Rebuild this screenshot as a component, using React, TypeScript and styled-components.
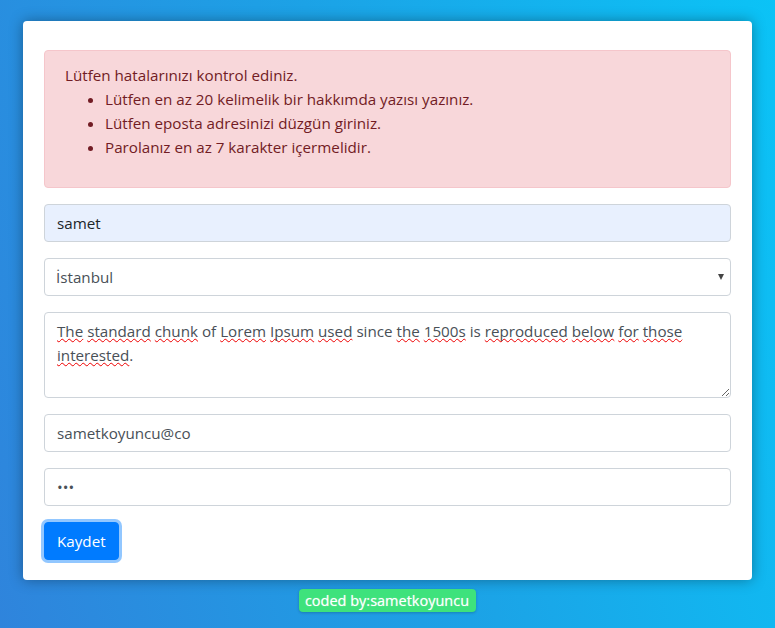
import React from "react";
import styled, { createGlobalStyle } from "styled-components";

const Global = createGlobalStyle`
  html, body {
    margin: 0;
    min-height: 100%;
  }
  body {
    font-family: "Open Sans", "Noto Sans", sans-serif;
    font-size: 15.2px;
    line-height: 24px;
    color: #212529;
    background: linear-gradient(75deg, #2f84dc 0%, #1ca2e6 50%, #0bc3f6 100%);
    min-height: 628px;
  }
  * { box-sizing: border-box; }
`;

const Page = styled.div`
  padding-top: 21px;
  display: flex;
  flex-direction: column;
  align-items: center;
`;

const Card = styled.div`
  width: 729px;
  background: #fff;
  border-radius: 4px;
  padding: 29px 21px 20px;
  box-shadow: 0 0 14px rgba(0, 0, 0, 0.35);
`;

const Alert = styled.div`
  background: #f8d7da;
  border: 1px solid #f5c6cb;
  color: #721c24;
  border-radius: 4px;
  padding: 12px 20px;
  margin-bottom: 16px;
`;

const ErrorList = styled.ul`
  margin: 0 0 16px;
  padding-left: 40px;
`;

const Field = styled.input<{ $autofill?: boolean }>`
  display: block;
  width: 100%;
  height: 38px;
  padding: 6px 12px;
  font: inherit;
  color: ${(p) => (p.$autofill ? "#212529" : "#495057")};
  background: ${(p) => (p.$autofill ? "#e8f0fe" : "#fff")};
  border: 1px solid #ced4da;
  border-radius: 4px;
  margin-bottom: 16px;
  outline: none;
`;

const SelectWrap = styled.div`
  position: relative;
  margin-bottom: 16px;

  &::after {
    content: "";
    position: absolute;
    right: 7px;
    top: 16px;
    border-left: 3.5px solid transparent;
    border-right: 3.5px solid transparent;
    border-top: 6px solid #444;
    pointer-events: none;
  }
`;

const Select = styled.select`
  display: block;
  width: 100%;
  height: 38px;
  padding: 6px 11px;
  font: inherit;
  color: #495057;
  background: #fff;
  border: 1px solid #ced4da;
  border-radius: 4px;
  appearance: none;
  outline: none;
`;

const TextBox = styled.div`
  height: 86px;
  padding: 6px 12px;
  color: #495057;
  border: 1px solid #ced4da;
  border-radius: 4px;
  margin-bottom: 16px;
  overflow: auto;
  resize: vertical;
`;

const Typo = styled.span`
  text-decoration: underline wavy #e00;
  text-decoration-thickness: 1px;
  text-underline-offset: 1px;
  text-decoration-skip-ink: none;
`;

const Button = styled.button`
  font: inherit;
  color: #fff;
  background: #007bff;
  border: 1px solid #007bff;
  border-radius: 4px;
  padding: 6px 12px;
  height: 38px;
  box-shadow: 0 0 0 3px rgba(38, 143, 255, 0.5);
  cursor: pointer;
`;

const Badge = styled.div`
  margin-top: 9px;
  background: #3ee27c;
  color: #fff;
  font-size: 14.5px;
  font-weight: 500;
  line-height: 23px;
  padding: 0 7px 0 6px;
  border-radius: 4px;
  box-shadow: 0 1px 3px rgba(0, 0, 0, 0.2);
  text-shadow: 0 0 1px rgba(255, 255, 255, 0.6);
`;

const words: [string, boolean][] = [
  ["The", true], ["standard", true], ["chunk", true], ["of", false], ["Lorem", true],
  ["Ipsum", true], ["used", true], ["since", false], ["the", true], ["1500s", true],
  ["is", false], ["reproduced", true], ["below", true], ["for", true], ["those", true],
];

export default function App() {
  return (
    <Page>
      <Global />
      <Card>
        <Alert>
          Lütfen hatalarınızı kontrol ediniz.
          <ErrorList>
            <li>Lütfen en az 20 kelimelik bir hakkımda yazısı yazınız.</li>
            <li>Lütfen eposta adresinizi düzgün giriniz.</li>
            <li>Parolanız en az 7 karakter içermelidir.</li>
          </ErrorList>
        </Alert>
        <Field $autofill defaultValue="samet" />
        <SelectWrap>
          <Select defaultValue="istanbul">
            <option value="istanbul">İstanbul</option>
            <option value="ankara">Ankara</option>
          </Select>
        </SelectWrap>
        <TextBox>
          {words.map(([w, bad], i) => (
            <React.Fragment key={i}>
              {bad ? <Typo>{w}</Typo> : w}{" "}
            </React.Fragment>
          ))}
          <br />
          <Typo>interested</Typo>.
        </TextBox>
        <Field defaultValue="sametkoyuncu@co" />
        <Field type="password" defaultValue="123" />
        <Button>Kaydet</Button>
      </Card>
      <Badge>coded by:sametkoyuncu</Badge>
    </Page>
  );
}
